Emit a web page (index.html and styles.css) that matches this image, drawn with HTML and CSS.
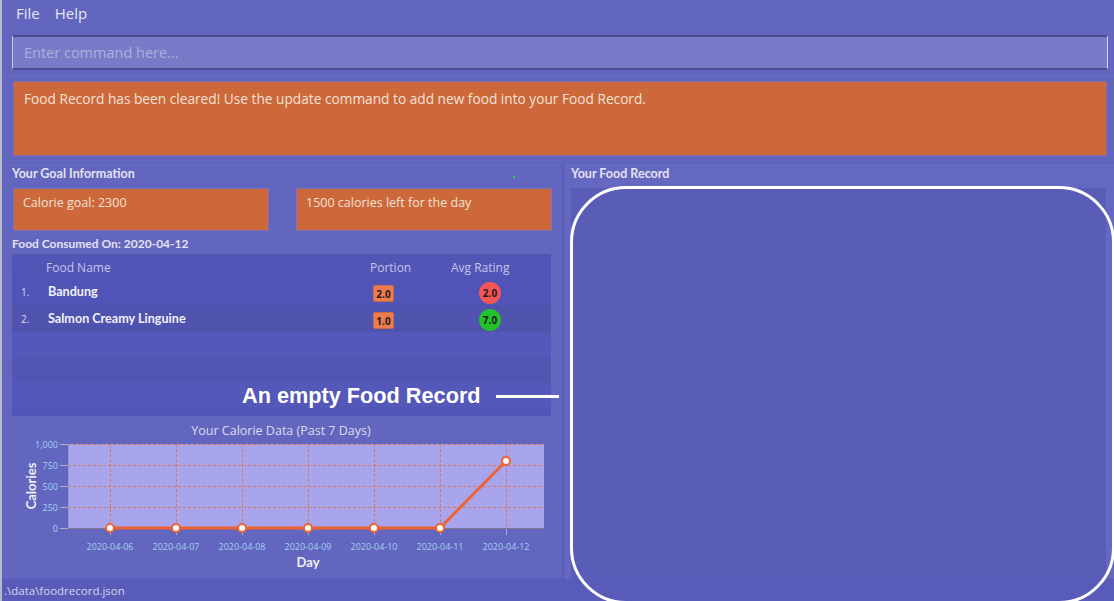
FILE: index.html
```html
<!DOCTYPE html>
<html>
<head>
<meta charset="utf-8">
<link rel="stylesheet" href="styles.css">
</head>
<body>
<div class="window">
  <div class="menubar">
    <span class="menu-item">File</span>
    <span class="menu-item">Help</span>
  </div>
  <div class="command-area">
    <div class="command-box">Enter command here...</div>
  </div>
  <div class="result-area">
    <div class="result-box">Food Record has been cleared! Use the update command to add new food into your Food Record.</div>
  </div>
  <div class="main">
    <div class="left-panel">
      <div class="section-title">Your Goal Information</div>
      <div class="goal-row">
        <div class="goal-box">Calorie goal: 2300</div>
        <div class="goal-box">1500 calories left for the day</div>
      </div>
      <div class="section-title consumed">Food Consumed On: 2020-04-12</div>
      <div class="food-list">
        <div class="list-head">
          <span class="col-name">Food Name</span>
          <span class="col-portion">Portion</span>
          <span class="col-rating">Avg Rating</span>
        </div>
        <div class="food-row">
          <span class="idx">1.</span>
          <span class="fname">Bandung</span>
          <span class="portion-cell"><span class="portion">2.0</span></span>
          <span class="rating-cell"><span class="rating red">2.0</span></span>
        </div>
        <div class="food-row alt">
          <span class="idx">2.</span>
          <span class="fname">Salmon Creamy Linguine</span>
          <span class="portion-cell"><span class="portion">1.0</span></span>
          <span class="rating-cell"><span class="rating green">7.0</span></span>
        </div>
        <div class="food-row empty"></div>
        <div class="food-row empty alt"></div>
        <div class="food-row empty"></div>
      </div>
      <div class="chart">
        <svg width="549" height="158" viewBox="0 0 549 158">
          <text x="269" y="14" class="c-title" text-anchor="middle">Your Calorie Data (Past 7 Days)</text>
          <rect x="56" y="23" width="476" height="84" fill="#a8a5ec"/>
          <g stroke="#e0724a" stroke-width="1" stroke-dasharray="3,2" opacity="0.85">
            <line x1="56" y1="23.5" x2="532" y2="23.5"/>
            <line x1="56" y1="44.5" x2="532" y2="44.5"/>
            <line x1="56" y1="65.5" x2="532" y2="65.5"/>
            <line x1="56" y1="86.5" x2="532" y2="86.5"/>
            <line x1="98.5" y1="23" x2="98.5" y2="107"/>
            <line x1="164.5" y1="23" x2="164.5" y2="107"/>
            <line x1="230.5" y1="23" x2="230.5" y2="107"/>
            <line x1="296.5" y1="23" x2="296.5" y2="107"/>
            <line x1="362.5" y1="23" x2="362.5" y2="107"/>
            <line x1="428.5" y1="23" x2="428.5" y2="107"/>
            <line x1="494.5" y1="23" x2="494.5" y2="107"/>
          </g>
          <line x1="56.5" y1="23" x2="56.5" y2="107" stroke="#9a98d8" stroke-width="1"/>
          <line x1="56" y1="107.5" x2="532" y2="107.5" stroke="#7c7c8c" stroke-width="1"/>
          <g stroke="#b0b0c8" stroke-width="1">
            <line x1="48" y1="23.5" x2="56" y2="23.5"/>
            <line x1="48" y1="44.5" x2="56" y2="44.5"/>
            <line x1="48" y1="65.5" x2="56" y2="65.5"/>
            <line x1="48" y1="86.5" x2="56" y2="86.5"/>
            <line x1="48" y1="107.5" x2="56" y2="107.5"/>
            <line x1="98.5" y1="108" x2="98.5" y2="114"/>
            <line x1="164.5" y1="108" x2="164.5" y2="114"/>
            <line x1="230.5" y1="108" x2="230.5" y2="114"/>
            <line x1="296.5" y1="108" x2="296.5" y2="114"/>
            <line x1="362.5" y1="108" x2="362.5" y2="114"/>
            <line x1="428.5" y1="108" x2="428.5" y2="114"/>
            <line x1="494.5" y1="108" x2="494.5" y2="114"/>
          </g>
          <g class="c-ylab" text-anchor="end">
            <text x="46" y="27">1,000</text>
            <text x="46" y="48">750</text>
            <text x="46" y="69">500</text>
            <text x="46" y="90">250</text>
            <text x="46" y="111">0</text>
          </g>
          <g class="c-xlab" text-anchor="middle">
            <text x="98" y="129">2020-04-06</text>
            <text x="164" y="129">2020-04-07</text>
            <text x="230" y="129">2020-04-08</text>
            <text x="296" y="129">2020-04-09</text>
            <text x="362" y="129">2020-04-10</text>
            <text x="428" y="129">2020-04-11</text>
            <text x="494" y="129">2020-04-12</text>
          </g>
          <text class="c-axis" x="296" y="146" text-anchor="middle">Day</text>
          <text class="c-axis" transform="translate(24,65) rotate(-90)" text-anchor="middle">Calories</text>
          <polyline points="98,107 164,107 230,107 296,107 362,107 428,107 494,40" fill="none" stroke="#f06232" stroke-width="3"/>
          <g fill="#ffffff" stroke="#f06232" stroke-width="2">
            <circle cx="98" cy="107" r="4"/>
            <circle cx="164" cy="107" r="4"/>
            <circle cx="230" cy="107" r="4"/>
            <circle cx="296" cy="107" r="4"/>
            <circle cx="362" cy="107" r="4"/>
            <circle cx="428" cy="107" r="4"/>
            <circle cx="494" cy="40" r="4"/>
          </g>
        </svg>
      </div>
    </div>
    <div class="divider"></div>
    <div class="right-panel">
      <div class="section-title">Your Food Record</div>
      <div class="record-list"></div>
    </div>
  </div>
  <div class="statusbar">.\data\foodrecord.json</div>

  <div class="annot-label">An empty Food Record</div>
  <div class="annot-line"></div>
  <div class="annot-frame"></div>
  <div class="green-dot"></div>
</div>
</body>
</html>
```
FILE: styles.css
```css
* { box-sizing: border-box; }
html, body {
  margin: 0;
  padding: 0;
  width: 1114px;
  height: 601px;
  overflow: hidden;
  background: #6366be;
  font-family: "Open Sans", "Noto Sans", sans-serif;
}
.window {
  position: relative;
  width: 1114px;
  height: 601px;
  display: flex;
  flex-direction: column;
  border-left: 2px solid #b8b8cc;
}
.menubar {
  height: 30px;
  display: flex;
  align-items: center;
  gap: 15px;
  padding-left: 14px;
  padding-bottom: 4px;
  background: #6366bf;
}
.menu-item {
  color: #e6e6f4;
  font-size: 15px;
}
.command-area {
  height: 45px;
  padding: 5px 6px 0 10px;
}
.command-box {
  height: 35px;
  background: #787bc8;
  border-top: 2px solid #4a4d92;
  border-bottom: 2px solid #4a4d92;
  border-left: 1px solid #c9c9ea;
  border-right: 1px solid #d6d6f2;
  color: #aeb0dc;
  font-size: 14.5px;
  padding-left: 11px;
  padding-bottom: 1px;
  display: flex;
  align-items: center;
}
.result-area {
  height: 87px;
  border-top: 1px solid #6a6dc4;
  padding: 5px 7px 0 11px;
}
.result-box {
  height: 75px;
  background: #cc6839;
  border: 1px solid #8a6aa8;
  color: #f3e2d8;
  font-size: 13.7px;
  padding: 7px 10px;
}
.main {
  flex: 1;
  display: flex;
  border-top: 1px solid #5d60b8;
}
.left-panel {
  width: 559px;
  padding: 1px 0 0 10px;
  display: flex;
  flex-direction: column;
  background: #6366be;
}
.section-title {
  color: #e2e2f2;
  font-family: "Lato", "Open Sans", sans-serif;
  font-size: 12.5px;
  font-weight: 700;
  height: 20px;
  line-height: 19px;
}
.goal-row {
  display: flex;
  gap: 27px;
  padding-left: 1px;
  padding-top: 4px;
}
.goal-box {
  width: 256px;
  height: 43px;
  background: #cc6839;
  border: 1px solid #7e72b6;
  color: #f3e2d8;
  font-size: 12.5px;
  padding: 5px 9px;
}
.consumed {
  margin-top: 3px;
  height: 20px;
  font-size: 12px;
}
.food-list {
  width: 539px;
  height: 162px;
  background: #5155b6;
  padding: 2px 0 0 0;
  display: flex;
  flex-direction: column;
}
.list-head {
  height: 22px;
  display: flex;
  align-items: center;
  color: #c4c6ea;
  font-size: 12px;
}
.col-name { margin-left: 34px; width: 324px; }
.col-portion { width: 81px; }
.food-row {
  height: 27px;
  display: flex;
  align-items: center;
  background: #5054b6;
}
.food-row.alt { background: #4f53ae; }
.food-row.empty { height: 25px; background: #5458b8; }
.food-row.empty.alt { background: #5256b2; }
.idx {
  width: 36px;
  padding-left: 9px;
  color: #d8d8f0;
  font-size: 10px;
}
.fname {
  width: 325px;
  color: #f0f0fa;
  font-family: "Lato", "Open Sans", sans-serif;
  font-size: 12.6px;
  font-weight: 700;
}
.portion-cell { width: 106px; }
.portion {
  display: inline-block;
  width: 21px;
  height: 17px;
  line-height: 17px;
  text-align: center;
  background: #ec7c50;
  border: 1px solid #c86a4a;
  color: #2a1a18;
  font-size: 10px;
  font-weight: 700;
  border-radius: 2px;
}
.rating {
  display: inline-block;
  width: 22px;
  height: 22px;
  line-height: 22px;
  text-align: center;
  border-radius: 50%;
  color: #1a1a1a;
  font-size: 10px;
  font-weight: 700;
}
.rating.red { background: #f45656; }
.rating.green { background: #22c22a; }
.chart {
  height: 158px;
  padding-top: 5px;
}
.chart svg { display: block; }
.c-title { fill: #dcdcf0; font-size: 12.5px; font-family: "Open Sans", sans-serif; }
.c-ylab text { fill: #9fd2f2; font-size: 9px; font-family: "Open Sans", sans-serif; }
.c-xlab text { fill: #9fd2f2; font-size: 9px; font-family: "Open Sans", sans-serif; }
.c-axis { fill: #eeeefa; font-size: 13px; font-weight: 700; font-family: "Lato", "Open Sans", sans-serif; }
.divider {
  width: 4px;
  background: #5d60b8;
}
.right-panel {
  flex: 1;
  padding: 1px 8px 0 6px;
  display: flex;
  flex-direction: column;
  background: #6568c0;
}
.record-list {
  flex: 1;
  margin-top: 4px;
  background: #595db8;
}
.statusbar {
  height: 22px;
  background: #585cb8;
  color: #d4d4ee;
  font-size: 11.5px;
  padding-left: 2px;
  line-height: 24px;
}
.annot-label {
  position: absolute;
  left: 240px;
  top: 383px;
  color: #ffffff;
  font-family: "Liberation Sans", Arial, sans-serif;
  font-weight: 700;
  font-size: 21.7px;
}
.annot-line {
  position: absolute;
  left: 494px;
  top: 395px;
  width: 63px;
  height: 3px;
  background: #ffffff;
}
.annot-frame {
  position: absolute;
  left: 568px;
  top: 186px;
  width: 545px;
  height: 418px;
  border: 3px solid #ffffff;
  border-radius: 56px;
}
.green-dot {
  position: absolute;
  left: 511px;
  top: 176px;
  width: 2px;
  height: 2px;
  background: #30d040;
}
```
